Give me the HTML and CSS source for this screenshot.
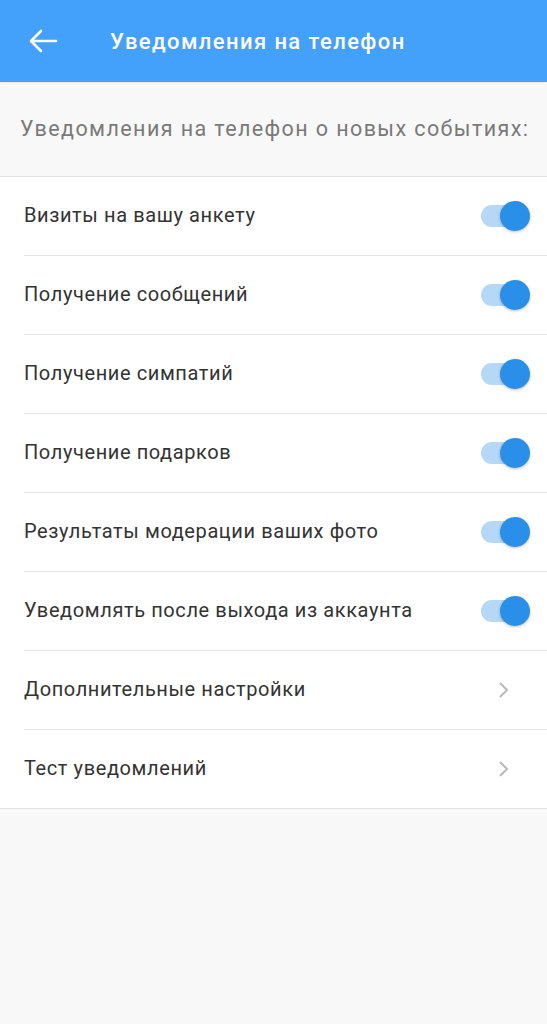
FILE: index.html
```html
<!DOCTYPE html>
<html lang="ru">
<head>
<meta charset="utf-8">
<link rel="stylesheet" href="styles.css">
</head>
<body>
<header class="topbar">
  <svg class="back" width="30" height="24" viewBox="0 0 30 24"><path d="M28 12H3M13 2L3 12l10 10" fill="none" stroke="#fff" stroke-width="2.6" stroke-linecap="round" stroke-linejoin="round"/></svg>
  <h1 class="title">Уведомления на телефон</h1>
</header>
<div class="intro">Уведомления на телефон о новых событиях:</div>
<ul class="list">
  <li class="row"><span class="label">Визиты на вашу анкету</span><span class="toggle"><span class="thumb"></span></span></li>
  <li class="row"><span class="label">Получение сообщений</span><span class="toggle"><span class="thumb"></span></span></li>
  <li class="row"><span class="label">Получение симпатий</span><span class="toggle"><span class="thumb"></span></span></li>
  <li class="row"><span class="label">Получение подарков</span><span class="toggle"><span class="thumb"></span></span></li>
  <li class="row"><span class="label">Результаты модерации ваших фото</span><span class="toggle"><span class="thumb"></span></span></li>
  <li class="row"><span class="label">Уведомлять после выхода из аккаунта</span><span class="toggle"><span class="thumb"></span></span></li>
  <li class="row"><span class="label">Дополнительные настройки</span><svg class="chev" width="14" height="20" viewBox="0 0 14 20"><path d="M3 3l7 7-7 7" fill="none" stroke="#b9b9b9" stroke-width="2"/></svg></li>
  <li class="row"><span class="label">Тест уведомлений</span><svg class="chev" width="14" height="20" viewBox="0 0 14 20"><path d="M3 3l7 7-7 7" fill="none" stroke="#b9b9b9" stroke-width="2"/></svg></li>
</ul>
</body>
</html>
```
FILE: styles.css
```css
* { box-sizing: border-box; }
html, body { margin: 0; padding: 0; }
body {
  background: #f8f8f8;
  font-family: Roboto, "Noto Sans", sans-serif;
  width: 547px;
  height: 1024px;
  overflow: hidden;
}
.topbar {
  height: 82px;
  background: #44a1fb;
  display: flex;
  align-items: center;
  padding-left: 28px;
  box-shadow: 0 1px 2px rgba(0,0,0,0.08);
}
.back { flex: none; }
.title {
  margin: 0 0 0 52px;
  color: #fff;
  font-size: 22px;
  font-weight: 500;
  letter-spacing: 1.4px;
}
.intro {
  height: 95px;
  display: flex;
  align-items: center;
  padding-left: 20px;
  padding-bottom: 2px;
  color: #7a7a7a;
  font-size: 21.5px;
  letter-spacing: 1.4px;
  white-space: nowrap;
  border-bottom: 1px solid #e2e2e2;
}
.list {
  list-style: none;
  margin: 0;
  padding: 0 0 0 24px;
  background: #fff;
  border-bottom: 1px solid #e2e2e2;
}
.row {
  height: 79px;
  display: flex;
  align-items: center;
  justify-content: space-between;
  padding-right: 18px;
  border-bottom: 1px solid #e6e6e6;
}
.row:last-child { border-bottom: none; height: 78px; }
.label {
  font-size: 20px;
  letter-spacing: 0.6px;
  color: #333;
  padding-bottom: 2px;
}
.toggle {
  position: relative;
  width: 40px;
  height: 22px;
  border-radius: 11px;
  background: #b5d8f7;
  margin-right: 8px;
}
.thumb {
  position: absolute;
  right: -9px;
  top: -4px;
  width: 30px;
  height: 30px;
  border-radius: 50%;
  background: #2a8fe9;
  box-shadow: 0 1px 3px rgba(0,0,0,0.25);
}
.chev { margin-right: 18px; }
```
